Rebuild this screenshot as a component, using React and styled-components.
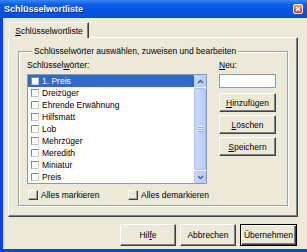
import React from "react";
import styled, { createGlobalStyle } from "styled-components";

const GlobalStyle = createGlobalStyle`
  html, body {
    margin: 0;
    padding: 0;
    background: #ece9d8;
  }
  body {
    font-family: "Liberation Sans", Arial, sans-serif;
    font-size: 8.5px;
    color: #000;
  }
`;

const Window = styled.div`
  width: 307px;
  height: 252px;
  display: flex;
  flex-direction: column;
  overflow: hidden;
`;

const TitleBar = styled.div`
  height: 18px;
  flex: none;
  display: flex;
  align-items: center;
  justify-content: space-between;
  padding: 0 4px 0 4px;
  background: linear-gradient(
    to bottom,
    #3a86f4 0%,
    #0c5ee8 25%,
    #0454e2 60%,
    #0a4ed6 100%
  );
`;

const Title = styled.span`
  color: #fff;
  font-weight: bold;
  font-size: 9px;
  text-shadow: 1px 1px 0 #0a2a8c;
`;

const CloseButton = styled.div`
  width: 10px;
  height: 10px;
  box-sizing: border-box;
  border: 1px solid #fff;
  border-radius: 2px;
  background: linear-gradient(to bottom, #f08a66, #d9431c);
  display: flex;
  align-items: center;
  justify-content: center;
`;

const Frame = styled.div`
  flex: 1;
  display: flex;
  flex-direction: column;
  background: #ece9d8;
  border-left: 3px solid #0846d8;
  border-bottom: 3px solid #0846d8;
  padding: 4px 10px 0 5px;
`;

const TabStrip = styled.div`
  display: flex;
  padding-left: 1px;
  height: 15px;
  position: relative;
  z-index: 1;
`;

const Tab = styled.div`
  width: 80px;
  height: 16px;
  box-sizing: border-box;
  border-top: 1px solid #fff;
  border-left: 1px solid #fff;
  border-right: 1px solid #404040;
  box-shadow: inset -1px 0 0 #808080;
  background: #ece9d8;
  display: flex;
  align-items: center;
  justify-content: center;
  padding-top: 1px;
`;

const Panel = styled.div`
  width: 290px;
  height: 180px;
  box-sizing: border-box;
  border-top: 1px solid #fff;
  border-left: 1px solid #fff;
  border-right: 1px solid #404040;
  border-bottom: 1px solid #404040;
  box-shadow: inset -1px -1px 0 #808080;
  padding: 8px 9px 10px 9px;
  display: flex;
`;

const Group = styled.fieldset`
  flex: 1;
  margin: 0;
  padding: 4px 0 0 8px;
  min-width: 0;
  border: 1px solid #a0a0a0;
  box-shadow: 1px 1px 0 #fff, inset 1px 1px 0 #fff;
`;

const Legend = styled.legend`
  margin-left: 5px;
  padding: 0 2px;
  line-height: 10px;
  background: #ece9d8;
`;

const Columns = styled.div`
  display: flex;
  gap: 12px;
`;

const Column = styled.div`
  width: ${(p) => p.$width}px;
  display: flex;
  flex-direction: column;
`;

const Label = styled.div`
  line-height: 10px;
  margin-bottom: 4px;
`;

const Key = styled.span`
  text-decoration: underline;
`;

const ListBox = styled.div`
  height: 110px;
  box-sizing: border-box;
  border: 1px solid #7f9db9;
  background: #fff;
  display: flex;
`;

const Rows = styled.div`
  flex: 1;
  display: flex;
  flex-direction: column;
`;

const Row = styled.div`
  height: 12px;
  display: flex;
  align-items: center;
  gap: 3px;
  padding-left: 3px;
  background: ${(p) => (p.$selected ? "#316ac5" : "transparent")};
  color: ${(p) => (p.$selected ? "#fff" : "#000")};
  white-space: nowrap;
`;

const ItemCheck = styled.span`
  width: 8px;
  height: 8px;
  box-sizing: border-box;
  flex: none;
  background: #fff;
  border-top: 1px solid #8a8a8a;
  border-left: 1px solid #8a8a8a;
  border-right: 1px solid #c8c8c8;
  border-bottom: 1px solid #c8c8c8;
`;

const ScrollBar = styled.div`
  width: 12px;
  display: flex;
  flex-direction: column;
  background: #f4f3ee;
`;

const ScrollButton = styled.div`
  height: 12px;
  box-sizing: border-box;
  border: 1px solid #b4c8f6;
  border-radius: 2px;
  background: linear-gradient(to right, #c8d8fc, #b6cbf6);
  display: flex;
  align-items: center;
  justify-content: center;
`;

const Thumb = styled.div`
  flex: 1;
  margin: 1px 0;
  box-sizing: border-box;
  border: 1px solid #a8bef0;
  border-radius: 2px;
  background: linear-gradient(to right, #cbdafc, #b9cdf8);
  display: flex;
  align-items: center;
  justify-content: center;
`;

const Grip = styled.div`
  width: 5px;
  height: 6px;
  background: repeating-linear-gradient(
    to bottom,
    #eef3fe 0px,
    #eef3fe 1px,
    #8ca8e4 1px,
    #8ca8e4 2px
  );
`;

const CheckRow = styled.div`
  display: flex;
  margin-top: 6px;
`;

const CheckItem = styled.div`
  display: flex;
  align-items: center;
  gap: 3px;
  flex: none;
  width: ${(p) => p.$width}px;
  line-height: 10px;
  white-space: nowrap;
`;

const CheckBox = styled.span`
  width: 10px;
  height: 10px;
  box-sizing: border-box;
  flex: none;
  margin-left: 1px;
  background: #ece9d8;
  border-top: 1px solid #fff;
  border-left: 1px solid #fff;
  border-right: 1px solid #404040;
  border-bottom: 1px solid #404040;
  box-shadow: inset -1px -1px 0 #a0a0a0;
`;

const TextBox = styled.div`
  height: 14px;
  box-sizing: border-box;
  border: 1px solid #7f9db9;
  background: #fff;
`;

const SideButtons = styled.div`
  display: flex;
  flex-direction: column;
  gap: 3px;
  margin-top: 5px;
`;

const Button = styled.div`
  width: ${(p) => p.$width || 57}px;
  height: ${(p) => p.$height || 19}px;
  box-sizing: border-box;
  display: flex;
  align-items: center;
  justify-content: center;
  white-space: nowrap;
  background: #ece9d8;
  border-top: 1px solid #fff;
  border-left: 1px solid #fff;
  border-right: 1px solid #404040;
  border-bottom: 1px solid #404040;
  box-shadow: inset -1px -1px 0 #808080;
  ${(p) =>
    p.$default &&
    `
      border: 1px solid #000;
      box-shadow: inset 1px 1px 0 #fff, inset -1px -1px 0 #404040, inset -2px -2px 0 #808080;
    `}
`;

const ButtonBar = styled.div`
  display: flex;
  justify-content: flex-end;
  gap: 4px;
  margin-top: 7px;
`;

const keywords = [
  "1. Preis",
  "Dreizüger",
  "Ehrende Erwähnung",
  "Hilfsmatt",
  "Lob",
  "Mehrzüger",
  "Meredith",
  "Miniatur",
  "Preis",
];

function Chevron({ down }) {
  return (
    <svg width="7" height="5" viewBox="0 0 7 5">
      <path
        d={down ? "M1 1 L3.5 3.5 L6 1" : "M1 4 L3.5 1.5 L6 4"}
        fill="none"
        stroke="#4d6185"
        strokeWidth="1.5"
      />
    </svg>
  );
}

export default function App() {
  return (
    <Window>
      <GlobalStyle />
      <TitleBar>
        <Title>Schlüsselwortliste</Title>
        <CloseButton>
          <svg width="6" height="6" viewBox="0 0 6 6">
            <path d="M1 1 L5 5 M5 1 L1 5" stroke="#fff" strokeWidth="1.4" />
          </svg>
        </CloseButton>
      </TitleBar>
      <Frame>
        <TabStrip>
          <Tab>
            <span>
              <Key>S</Key>chlüsselwortliste
            </span>
          </Tab>
        </TabStrip>
        <Panel>
          <Group>
            <Legend>Schlüsselwörter auswählen, zuweisen und bearbeiten</Legend>
            <Columns>
              <Column $width={180}>
                <Label>
                  Schlüssel<Key>w</Key>örter:
                </Label>
                <ListBox>
                  <Rows>
                    {keywords.map((k, i) => (
                      <Row key={k} $selected={i === 0}>
                        <ItemCheck />
                        {k}
                      </Row>
                    ))}
                  </Rows>
                  <ScrollBar>
                    <ScrollButton>
                      <Chevron />
                    </ScrollButton>
                    <Thumb>
                      <Grip />
                    </Thumb>
                    <ScrollButton>
                      <Chevron down />
                    </ScrollButton>
                  </ScrollBar>
                </ListBox>
                <CheckRow>
                  <CheckItem $width={100}>
                    <CheckBox />
                    Alles markieren
                  </CheckItem>
                  <CheckItem $width={80}>
                    <CheckBox />
                    Alles demarkieren
                  </CheckItem>
                </CheckRow>
              </Column>
              <Column $width={57}>
                <Label>
                  <Key>N</Key>eu:
                </Label>
                <TextBox />
                <SideButtons>
                  <Button>
                    <span>
                      <Key>H</Key>inzufügen
                    </span>
                  </Button>
                  <Button>
                    <span>
                      <Key>L</Key>öschen
                    </span>
                  </Button>
                  <Button>
                    <span>
                      <Key>S</Key>peichern
                    </span>
                  </Button>
                </SideButtons>
              </Column>
            </Columns>
          </Group>
        </Panel>
        <ButtonBar>
          <Button $width={56} $height={22}>
            <span>
              Hil<Key>f</Key>e
            </span>
          </Button>
          <Button $width={56} $height={22}>
            Abbrechen
          </Button>
          <Button $width={57} $height={22} $default>
            Übernehmen
          </Button>
        </ButtonBar>
      </Frame>
    </Window>
  );
}
